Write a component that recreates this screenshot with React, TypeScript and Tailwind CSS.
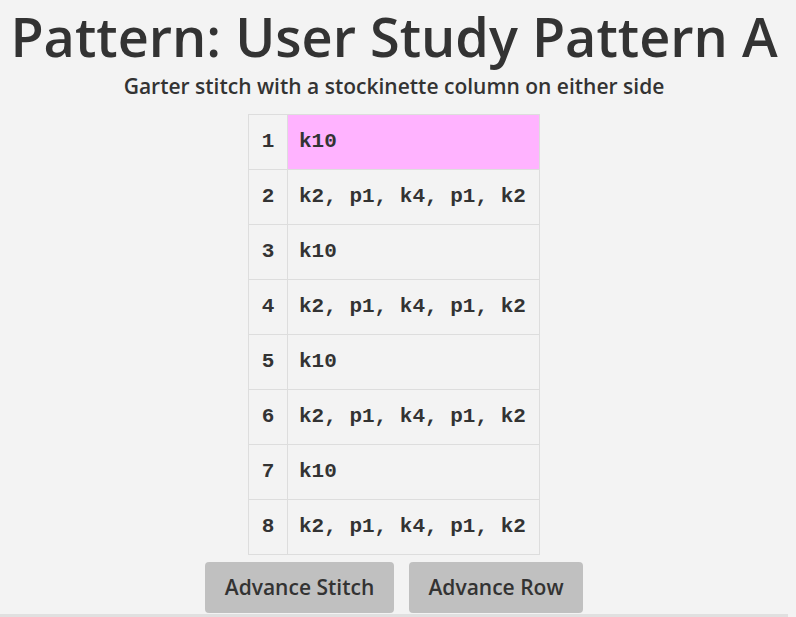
import React from "react";

const ROWS = [
  "k10",
  "k2, p1, k4, p1, k2",
  "k10",
  "k2, p1, k4, p1, k2",
  "k10",
  "k2, p1, k4, p1, k2",
  "k10",
  "k2, p1, k4, p1, k2",
];

export default function App() {
  const current = 0;

  return (
    <div className="min-h-[617px] bg-[#f3f3f3] text-[#333] flex flex-col items-center pr-[8px] font-['Open_Sans',sans-serif]">
      {/* Title */}
      <h1 className="text-[54px] leading-none font-semibold mt-[9px] whitespace-nowrap">
        Pattern: User Study Pattern A
      </h1>
      <p className="text-[21px] font-semibold leading-none mt-[13px]">
        Garter stitch with a stockinette column on either side
      </p>

      {/* Pattern rows */}
      <table className="mt-[17px] border-collapse border border-[#dddddd] font-['Liberation_Mono',monospace] font-bold text-[21px] text-[#333]">
        <tbody>
          {ROWS.map((row, i) => (
            <tr key={i} className="h-[55px]">
              <td className="w-[39px] border border-[#dddddd] text-center align-middle">
                {i + 1}
              </td>
              <td
                className={
                  i === current
                    ? "w-[252px] border border-[#dddddd] pl-[11px] align-middle bg-[#ffb3ff]"
                    : "w-[252px] border border-[#dddddd] pl-[11px] align-middle"
                }
              >
                {row}
              </td>
            </tr>
          ))}
        </tbody>
      </table>

      {/* Controls */}
      <div className="flex gap-[15px] mt-[7px]">
        <button className="h-[51px] w-[189px] rounded-[4px] bg-[#c0c0c0] text-[21px] font-semibold text-[#333]">
          Advance Stitch
        </button>
        <button className="h-[51px] w-[174px] rounded-[4px] bg-[#c0c0c0] text-[21px] font-semibold text-[#333]">
          Advance Row
        </button>
      </div>
      <div className="w-full h-[3px] bg-[#e0e0e0] mt-[1px]" />
    </div>
  );
}
